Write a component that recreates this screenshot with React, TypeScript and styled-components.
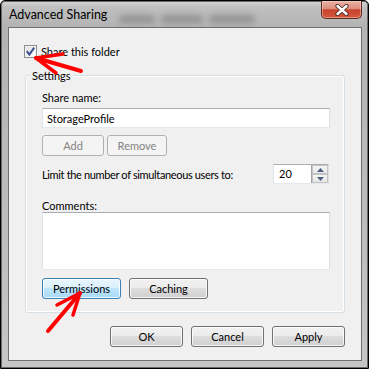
import React from 'react';
import styled, { createGlobalStyle, css } from 'styled-components';

const GlobalStyle = createGlobalStyle`
  html, body { margin: 0; padding: 0; background: #ffffff; }
  body { font-family: Lato, "Noto Sans", sans-serif; font-size: 11px; color: #000; }
  * { box-sizing: border-box; }
`;

const UI_FONT = `Lato, "Noto Sans", sans-serif`;

const Window = styled.div`
  position: relative;
  width: 369px;
  height: 369px;
  border: 1px solid #000;
  border-radius: 5px 5px 0 0;
  box-shadow: inset 0 0 0 1px #6a6a6a;
  background: linear-gradient(
    to bottom,
    #d6d6d6 0px,
    #c0c0c0 6px,
    #b3b3b3 26px,
    #bdbdbd 60%,
    #c6c6c6 100%
  );
  display: flex;
  flex-direction: column;
  padding: 0 6px 7px 7px;
  overflow: hidden;
`;

const TitleBar = styled.div`
  height: 26px;
  display: flex;
  align-items: flex-start;
  padding-left: 1px;
`;

const Title = styled.div`
  font-family: ${UI_FONT};
  font-size: 12.5px;
  line-height: 15px;
  margin-top: 6px;
  color: #000;
  white-space: nowrap;
`;

const Ghost = styled.div`
  display: flex;
  gap: 6px;
  margin: 14px 0 0 12px;
  filter: blur(3px);
  opacity: 0.4;
`;

const GhostBlob = styled.span<{ $w: number }>`
  display: block;
  width: ${(p) => p.$w}px;
  height: 8px;
  border-radius: 4px;
  background: #5a5a5a;
`;

const Spacer = styled.div`
  flex: 1;
`;

const CloseButton = styled.div`
  width: 41px;
  height: 18px;
  border: 1px solid #5e2b22;
  border-top: none;
  border-radius: 0 0 5px 5px;
  background: linear-gradient(
    to bottom,
    #eab1a4 0%,
    #dd8e7d 45%,
    #c8432c 52%,
    #d4583d 100%
  );
  box-shadow: inset 0 0 0 1px rgba(255, 220, 210, 0.45);
  display: flex;
  align-items: center;
  justify-content: center;
`;

const Client = styled.div`
  flex: 1;
  border: 1px solid #6f6f6f;
  background: #f0f0f0;
  padding: 17px 16px 0 16px;
  display: flex;
  flex-direction: column;
`;

const CheckRow = styled.div`
  display: flex;
  align-items: center;
  gap: 4px;
  height: 13px;
  line-height: 13px;
  margin-left: -1px;
  white-space: nowrap;
`;

const CheckBox = styled.span`
  width: 13px;
  height: 13px;
  border: 1px solid #8e8f8f;
  background: linear-gradient(135deg, #dcdcdc 0%, #f4f4f4 60%, #ffffff 100%);
  box-shadow: inset 0 0 0 1px #f4f4f4;
  display: flex;
  align-items: center;
  justify-content: center;
  flex: none;
`;

const Group = styled.div`
  position: relative;
  margin-top: 17px;
  border: 1px solid #d5dfe5;
  border-radius: 3px;
  box-shadow: inset 0 0 0 1px #ffffff;
  padding: 15px 14px 13px 16px;
  display: flex;
  flex-direction: column;
`;

const Legend = styled.span`
  position: absolute;
  top: -7px;
  left: 4px;
  padding: 0 2px;
  background: #f0f0f0;
  line-height: 13px;
`;

const FieldLabel = styled.div<{ $mt?: number }>`
  line-height: 13px;
  margin-top: ${(p) => p.$mt ?? 0}px;
  white-space: nowrap;
`;

const LimitLabel = styled.span`
  line-height: 13px;
  letter-spacing: -0.35px;
  white-space: nowrap;
`;

const fieldBorder = css`
  border: 1px solid;
  border-color: #abadb3 #dbdfe6 #e3e9ef #e2e3ea;
  background: #ffffff;
  font-family: ${UI_FONT};
  font-size: 11px;
  color: #000;
  outline: none;
`;

const TextInput = styled.input`
  ${fieldBorder};
  display: block;
  width: 100%;
  height: 20px;
  margin-top: 4px;
  padding: 0 4px;
`;

const CommentsArea = styled.textarea`
  ${fieldBorder};
  display: block;
  width: 100%;
  height: 58px;
  resize: none;
  padding: 2px 4px;
`;

const ButtonRow = styled.div<{ $gap: number; $mt: number }>`
  display: flex;
  gap: ${(p) => p.$gap}px;
  margin-top: ${(p) => p.$mt}px;
`;

type Variant = 'normal' | 'hot' | 'disabled';

const Button = styled.button<{ $w: number; $variant?: Variant }>`
  width: ${(p) => p.$w}px;
  height: 21px;
  padding: 0;
  font-family: ${UI_FONT};
  font-size: 11px;
  line-height: 13px;
  color: #000;
  border: 1px solid #707070;
  border-radius: 3px;
  background: linear-gradient(
    to bottom,
    #f2f2f2 0%,
    #ebebeb 49%,
    #dddddd 50%,
    #cfcfcf 100%
  );
  box-shadow: inset 0 0 0 1px rgba(255, 255, 255, 0.8);
  ${(p) =>
    p.$variant === 'hot' &&
    css`
      border-color: #3c7fb1;
      background: linear-gradient(
        to bottom,
        #eaf6fd 0%,
        #d9f0fc 49%,
        #bee6fd 50%,
        #a7d9f5 100%
      );
    `}
  ${(p) =>
    p.$variant === 'disabled' &&
    css`
      border-color: #adb2b5;
      background: #f4f4f4;
      color: #838383;
      box-shadow: none;
    `}
`;

const LimitRow = styled.div`
  display: flex;
  align-items: center;
  justify-content: space-between;
  margin-top: 8px;
`;

const SpinBox = styled.div`
  ${fieldBorder};
  width: 56px;
  height: 20px;
  margin-right: 1px;
  display: flex;
`;

const SpinValue = styled.div`
  flex: 1;
  padding-left: 5px;
  line-height: 18px;
`;

const SpinButtons = styled.div`
  width: 17px;
  display: flex;
  flex-direction: column;
  border-left: 1px solid #a3a3a3;
`;

const SpinButton = styled.div`
  flex: 1;
  display: flex;
  align-items: center;
  justify-content: center;
  border: 1px solid #c4c4c4;
  background: linear-gradient(to bottom, #f6f6f6 0%, #e6e6e6 100%);
`;

const DialogButtons = styled.div`
  display: flex;
  justify-content: flex-end;
  gap: 8px;
  margin-top: 13px;
`;

const ArrowLayer = styled.svg`
  position: absolute;
  left: -1px;
  top: -1px;
  width: 369px;
  height: 369px;
  pointer-events: none;
`;

const Triangle = ({ up }: { up: boolean }) => (
  <svg width="7" height="4" viewBox="0 0 7 4">
    <path d={up ? 'M0 4 L3.5 0 L7 4 Z' : 'M0 0 L3.5 4 L7 0 Z'} fill="#4d6185" />
  </svg>
);

export default function App() {
  return (
    <>
      <GlobalStyle />
      <Window>
        <TitleBar>
          <Title>Advanced Sharing</Title>
          <Ghost aria-hidden="true">
            <GhostBlob $w={36} />
            <GhostBlob $w={42} />
            <GhostBlob $w={46} />
          </Ghost>
          <Spacer />
          <CloseButton>
            <svg width="14" height="12" viewBox="0 0 14 12">
              <path d="M2.5 2 L11.5 10 M11.5 2 L2.5 10" stroke="#4a2a24" strokeWidth="4.2" strokeLinecap="round" />
              <path d="M2.5 2 L11.5 10 M11.5 2 L2.5 10" stroke="#ffffff" strokeWidth="2.4" strokeLinecap="round" />
            </svg>
          </CloseButton>
        </TitleBar>
        <Client>
          <CheckRow>
            <CheckBox>
              <svg width="9" height="9" viewBox="0 0 9 9">
                <path d="M0.8 4.2 L3.4 7.6 L8.2 0.6" fill="none" stroke="#3a4d8f" strokeWidth="2" />
              </svg>
            </CheckBox>
            <span>Share this folder</span>
          </CheckRow>
          <Group>
            <Legend>Settings</Legend>
            <FieldLabel>Share name:</FieldLabel>
            <TextInput defaultValue="StorageProfile" readOnly />
            <ButtonRow $gap={3} $mt={7}>
              <Button $w={62} $variant="disabled">Add</Button>
              <Button $w={60} $variant="disabled">Remove</Button>
            </ButtonRow>
            <LimitRow>
              <LimitLabel>Limit the number of simultaneous users to:</LimitLabel>
              <SpinBox>
                <SpinValue>20</SpinValue>
                <SpinButtons>
                  <SpinButton><Triangle up /></SpinButton>
                  <SpinButton><Triangle up={false} /></SpinButton>
                </SpinButtons>
              </SpinBox>
            </LimitRow>
            <FieldLabel $mt={15}>Comments:</FieldLabel>
            <CommentsArea readOnly />
            <ButtonRow $gap={8} $mt={8}>
              <Button $w={79} $variant="hot">Permissions</Button>
              <Button $w={79}>Caching</Button>
            </ButtonRow>
          </Group>
          <DialogButtons>
            <Button $w={73}>OK</Button>
            <Button $w={73}>Cancel</Button>
            <Button $w={73}>Apply</Button>
          </DialogButtons>
        </Client>
        <ArrowLayer viewBox="0 0 369 369">
          <g stroke="#ff0000" strokeLinecap="round" fill="none">
            <path d="M36 58 L81 71" strokeWidth="4" />
            <path d="M36 58 L63 54" strokeWidth="3.5" />
            <path d="M36 58 L56 73" strokeWidth="3.5" />
            <path d="M80 293 L48 331" strokeWidth="4" />
            <path d="M80 293 L57 305" strokeWidth="3.5" />
            <path d="M80 293 L73 315" strokeWidth="3.5" />
          </g>
        </ArrowLayer>
      </Window>
    </>
  );
}
